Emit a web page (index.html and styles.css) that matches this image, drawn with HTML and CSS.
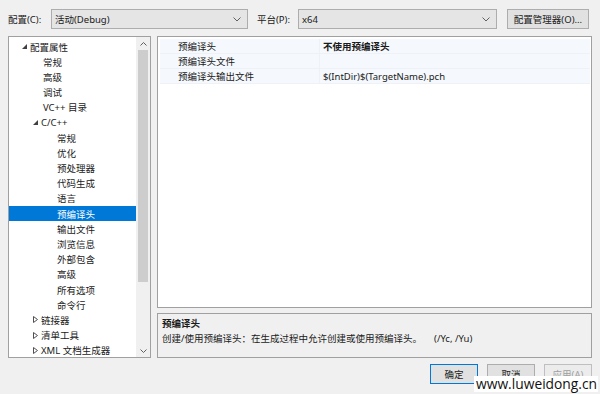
FILE: index.html
```html
<!DOCTYPE html>
<html lang="zh-CN">
<head>
<meta charset="utf-8">
<title>属性页</title>
<link rel="stylesheet" href="styles.css">
</head>
<body>
<div class="dialog">
  <div class="toolbar">
    <span class="label">配置(C):</span>
    <div class="combo combo-config"><span>活动(Debug)</span><svg class="chev" width="8" height="5" viewBox="0 0 8 5"><path d="M0.5 0.5 L4 4 L7.5 0.5" fill="none" stroke="#606060" stroke-width="1"/></svg></div>
    <span class="label label-plat">平台(P):</span>
    <div class="combo combo-plat"><span>x64</span><svg class="chev" width="8" height="5" viewBox="0 0 8 5"><path d="M0.5 0.5 L4 4 L7.5 0.5" fill="none" stroke="#606060" stroke-width="1"/></svg></div>
    <div class="btn btn-mgr">配置管理器(O)...</div>
  </div>
  <div class="main">
    <div class="tree">
      <div class="tree-list">
        <div class="node l1"><svg class="tri" width="5" height="5" viewBox="0 0 5 5"><path d="M5 0 L5 5 L0 5 Z" fill="#404040"/></svg>配置属性</div>
        <div class="node l2">常规</div>
        <div class="node l2">高级</div>
        <div class="node l2">调试</div>
        <div class="node l2">VC++ 目录</div>
        <div class="node l2 par"><svg class="tri" width="5" height="5" viewBox="0 0 5 5"><path d="M5 0 L5 5 L0 5 Z" fill="#404040"/></svg>C/C++</div>
        <div class="node l3">常规</div>
        <div class="node l3">优化</div>
        <div class="node l3">预处理器</div>
        <div class="node l3">代码生成</div>
        <div class="node l3">语言</div>
        <div class="node l3 sel">预编译头</div>
        <div class="node l3">输出文件</div>
        <div class="node l3">浏览信息</div>
        <div class="node l3">外部包含</div>
        <div class="node l3">高级</div>
        <div class="node l3">所有选项</div>
        <div class="node l3">命令行</div>
        <div class="node l2 par"><svg class="tri" width="5" height="7" viewBox="0 0 5 7"><path d="M0.5 0.5 L4.5 3.5 L0.5 6.5 Z" fill="none" stroke="#505050" stroke-width="1"/></svg>链接器</div>
        <div class="node l2 par"><svg class="tri" width="5" height="7" viewBox="0 0 5 7"><path d="M0.5 0.5 L4.5 3.5 L0.5 6.5 Z" fill="none" stroke="#505050" stroke-width="1"/></svg>清单工具</div>
        <div class="node l2 par"><svg class="tri" width="5" height="7" viewBox="0 0 5 7"><path d="M0.5 0.5 L4.5 3.5 L0.5 6.5 Z" fill="none" stroke="#505050" stroke-width="1"/></svg>XML 文档生成器</div>
      </div>
      <div class="vscroll">
        <svg class="arrow" width="7" height="4" viewBox="0 0 7 4"><path d="M0.5 3.5 L3.5 0.5 L6.5 3.5" fill="none" stroke="#606060" stroke-width="1"/></svg>
        <div class="track"><div class="thumb"></div></div>
        <svg class="arrow" width="7" height="4" viewBox="0 0 7 4"><path d="M0.5 0.5 L3.5 3.5 L6.5 0.5" fill="none" stroke="#606060" stroke-width="1"/></svg>
      </div>
    </div>
    <div class="right">
      <div class="grid">
        <div class="row"><div class="name">预编译头</div><div class="value bold">不使用预编译头</div></div>
        <div class="row"><div class="name">预编译头文件</div><div class="value"></div></div>
        <div class="row"><div class="name">预编译头输出文件</div><div class="value">$(IntDir)$(TargetName).pch</div></div>
      </div>
      <div class="desc">
        <div class="desc-title">预编译头</div>
        <div class="desc-text">创建/使用预编译头：在生成过程中允许创建或使用预编译头。<span class="switch">(/Yc, /Yu)</span></div>
      </div>
    </div>
  </div>
  <div class="footer">
    <div class="btn btn-ok">确定</div>
    <div class="btn">取消</div>
    <div class="btn disabled">应用(A)</div>
    <div class="watermark">www.luweidong.cn</div>
  </div>
</div>
</body>
</html>
```
FILE: styles.css
```css
html, body {
  margin: 0;
  padding: 0;
  background: #f0f0f0;
}
body {
  font-family: "Noto Sans", "Noto Sans CJK SC", sans-serif;
  font-size: 9.5px;
  color: #1a1a1a;
  width: 600px;
  height: 394px;
  overflow: hidden;
}
.dialog {
  display: flex;
  flex-direction: column;
  height: 394px;
  position: relative;
}
.toolbar {
  display: flex;
  align-items: center;
  height: 20px;
  padding: 9px 0 0 8px;
  margin-bottom: 7px;
}
.label {
  width: 43px;
}
.label-plat {
  width: 41px;
  margin-left: 9px;
}
.combo {
  box-sizing: border-box;
  height: 20px;
  background: #e5e5e5;
  border: 1px solid #adadad;
  display: flex;
  align-items: center;
  justify-content: space-between;
  padding: 0 6px 0 3px;
}
.combo-config { width: 197px; }
.combo-plat { width: 199px; }
.chev { display: block; }
.btn {
  box-sizing: border-box;
  height: 20px;
  width: 48px;
  background: #e1e1e1;
  border: 1px solid #adadad;
  display: flex;
  align-items: center;
  justify-content: center;
}
.btn-mgr {
  width: 82px;
  margin-left: 10px;
}
.main {
  display: flex;
  height: 322px;
  padding: 0 8px;
  gap: 6px;
}
.tree {
  box-sizing: border-box;
  width: 143px;
  height: 322px;
  background: #fff;
  border: 1px solid #a0a0a0;
  display: flex;
}
.tree-list {
  flex: 1;
  padding-top: 2px;
}
.node {
  height: 15.2px;
  display: flex;
  align-items: center;
  white-space: nowrap;
}
.tri {
  display: block;
  margin-right: 3px;
}
.node.l1 { padding-left: 13px; }
.node.l2 { padding-left: 34px; }
.node.l2.par { padding-left: 24px; }
.node.l3 { padding-left: 48px; }
.node.sel {
  background: #0078d7;
  color: #fff;
}
.vscroll {
  width: 14px;
  background: #f0f0f0;
  display: flex;
  flex-direction: column;
  align-items: center;
  padding: 5px 0 4px;
  box-sizing: border-box;
}
.arrow { display: block; }
.track {
  flex: 1;
  width: 100%;
  padding: 4px 2px 0;
  box-sizing: border-box;
}
.thumb {
  height: 232px;
  background: #cdcdcd;
}
.right {
  flex: 1;
  display: flex;
  flex-direction: column;
  gap: 5px;
}
.grid {
  box-sizing: border-box;
  height: 272px;
  background: #fff;
  border: 1px solid #a0a0a0;
  padding: 2px 1px 0 2px;
}
.row {
  display: flex;
  height: 15px;
  background: #f5f8fc;
  border-bottom: 1px solid #eef1f5;
  box-sizing: border-box;
}
.name {
  width: 141px;
  padding-left: 18px;
  display: flex;
  align-items: center;
  border-right: 1px solid #eef1f5;
}
.value {
  flex: 1;
  padding-left: 3px;
  display: flex;
  align-items: center;
}
.bold { font-weight: bold; }
.desc {
  box-sizing: border-box;
  height: 45px;
  border: 1px solid #a0a0a0;
  background: #f0f0f0;
  padding: 2px 4px;
}
.desc-title {
  font-weight: bold;
  line-height: 15px;
}
.desc-text {
  line-height: 15px;
}
.switch {
  margin-left: 12px;
}
.footer {
  display: flex;
  justify-content: flex-end;
  gap: 9px;
  padding: 6px 8px 0 0;
  position: relative;
}
.btn-ok {
  border: 1px solid #0078d7;
}
.btn.disabled {
  color: #a0a0a0;
  background: #ececec;
  border-color: #bfbfbf;
}
.watermark {
  position: absolute;
  right: 2px;
  top: 18px;
  background: #fff;
  color: #111;
  font-family: "Open Sans", "Liberation Sans", sans-serif;
  font-size: 13.8px;
  line-height: 16px;
  padding: 0 1px 0 2px;
}
```
